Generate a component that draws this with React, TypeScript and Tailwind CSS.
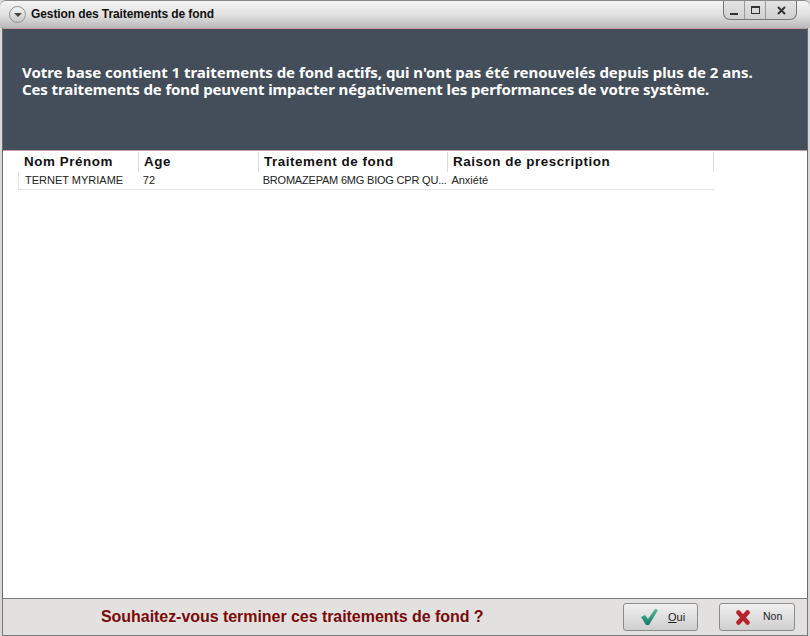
import React from 'react';

const font = "font-['Liberation_Sans',Arial,sans-serif]";

const TitleBar = () => (
  <div className="relative h-[28px] flex items-center bg-gradient-to-b from-[#f4f4f4] via-[#e2e2e2] to-[#b9b9b9] rounded-t-[6px] border-t border-[#8a8a8a]">
    <div className="ml-[9px] w-[17px] h-[17px] rounded-full border border-[#8f8f8f] bg-gradient-to-b from-[#f5f5f5] to-[#c9c9c9] flex items-center justify-center">
      <div className="w-0 h-0 border-l-[4px] border-r-[4px] border-t-[4px] border-l-transparent border-r-transparent border-t-[#444]"></div>
    </div>
    <span className="ml-[5px] -mt-[1px] text-[12px] font-bold text-[#111] tracking-[-0.1px]">Gestion des Traitements de fond</span>
    <div className="absolute top-0 left-[723px] w-[74px] h-[19px] flex bg-gradient-to-b from-[#e4e4e4] to-[#d0d0d0] border border-t-0 border-[#777] rounded-b-[7px]">
      <div className="w-[21px] border-r border-[#9a9a9a] flex items-end justify-center pb-[4px]">
        <div className="w-[8px] h-[2px] bg-[#333]"></div>
      </div>
      <div className="w-[21px] border-r border-[#9a9a9a] flex items-center justify-center">
        <div className="w-[9px] h-[8px] border border-t-2 border-[#333]"></div>
      </div>
      <div className="flex-1 flex items-center justify-center">
        <svg width="9" height="9" viewBox="0 0 9 9">
          <path d="M1 1 L8 8 M8 1 L1 8" stroke="#333" strokeWidth="2" />
        </svg>
      </div>
    </div>
  </div>
);

const columns = [
  { title: 'Nom Prénom', value: 'TERNET MYRIAME', w: 'w-[121px]', pad: 'pl-[6px]', cell: 'pl-[6px]' },
  { title: 'Age', value: '72', w: 'w-[120px]', pad: 'pl-[5px]', cell: 'pl-[3px]' },
  { title: 'Traitement de fond', value: 'BROMAZEPAM 6MG BIOG CPR QU...', w: 'w-[189px]', pad: 'pl-[5px]', cell: 'pl-[3px] tracking-[-0.2px]' },
  { title: 'Raison de prescription', value: 'Anxiété', w: 'w-[266px]', pad: 'pl-[5px]', cell: 'pl-[3px]' },
];

export default function App() {
  return (
    <div className={`${font} w-[810px] h-[636px] flex flex-col bg-[#d8d8d8] overflow-hidden`}>
      <TitleBar />
      <div className="flex-1 min-h-0 flex flex-col mx-[2px] border-x border-[#6a6a6a]">
        <div className="h-[123px] shrink-0 bg-[#434e5a] border-y border-[#c79aa4] pt-[35px] pl-[19px] text-white font-bold text-[15px] leading-[17px] font-['Noto_Sans',sans-serif] whitespace-nowrap">
          <p className="tracking-[-0.04px]">Votre base contient 1 traitements de fond actifs, qui n'ont pas été renouvelés depuis plus de 2 ans.</p>
          <p className="tracking-[-0.11px]">Ces traitements de fond peuvent impacter négativement les performances de votre système.</p>
        </div>
        <div className="flex-1 min-h-0 bg-white pl-[15px] pt-[1px]">
          <div className="flex w-[696px] h-[20px]">
            {columns.map((c) => (
              <div key={c.title} className={`${c.w} ${c.pad} border-r border-[#dcdcdc] text-[13.4px] leading-[20px] font-bold text-[#111] tracking-[0.55px] whitespace-nowrap`}>
                {c.title}
              </div>
            ))}
          </div>
          <div className="flex w-[696px] h-[18px] border-b border-l border-[#e4e4e4]">
            {columns.map((c) => (
              <div key={c.title} className={`${c.w} ${c.cell} text-[11px] leading-[17px] text-[#222] whitespace-nowrap overflow-hidden`}>
                {c.value}
              </div>
            ))}
          </div>
        </div>
      </div>
      <div className="h-[38px] shrink-0 mx-[2px] flex items-center border border-[#7a7a7a] bg-[#e3e1df]">
        <span className="ml-[98px] w-[520px] text-[16px] font-bold text-[#7a0a0a] tracking-[-0.05px]">Souhaitez-vous terminer ces traitements de fond ?</span>
        <button className="w-[75px] h-[28px] ml-[2px] flex items-center rounded-[3px] border border-[#8c8c8c] bg-gradient-to-b from-[#f0f0f0] to-[#cfcfcf]">
          <svg className="ml-[17px]" width="17" height="16" viewBox="0 0 17 16">
            <defs>
              <linearGradient id="check" x1="0" y1="0" x2="0" y2="1">
                <stop offset="0" stopColor="#4fc08f" />
                <stop offset="1" stopColor="#17786f" />
              </linearGradient>
            </defs>
            <path d="M0 8 L4 6 L7 10 L14 0 L17 1 L8 16 L5 16 Z" fill="url(#check)" />
          </svg>
          <span className="ml-[10px] text-[11px] text-[#222]"><span className="underline">O</span>ui</span>
        </button>
        <button className="w-[76px] h-[28px] ml-[21px] flex items-center rounded-[3px] border border-[#8c8c8c] bg-gradient-to-b from-[#f0f0f0] to-[#cfcfcf]">
          <svg className="ml-[16px]" width="14" height="15" viewBox="0 0 14 15">
            <path d="M2.5 2.5 L11.5 12.5 M11.5 2.5 L2.5 12.5" stroke="#b5232b" strokeWidth="4.5" strokeLinecap="round" />
          </svg>
          <span className="ml-[13px] text-[10.5px] text-[#222]">Non</span>
        </button>
      </div>
    </div>
  );
}
